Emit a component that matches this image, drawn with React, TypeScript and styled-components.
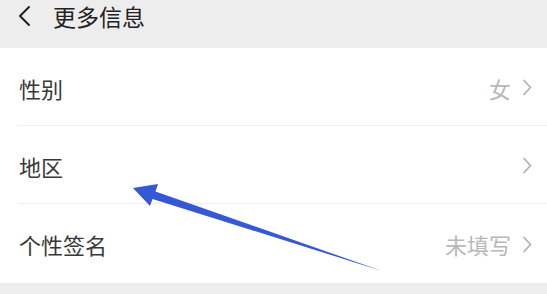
import React from "react";
import styled, { createGlobalStyle } from "styled-components";

const Global = createGlobalStyle`
  html, body { margin: 0; padding: 0; background: #ededed; }
  body { font-family: "Noto Sans CJK SC", "Noto Sans", sans-serif; }
`;

const Page = styled.div`
  position: relative;
  width: 547px;
  height: 294px;
  background: #ededed;
  overflow: hidden;
`;

const Header = styled.div`
  height: 48px;
  display: flex;
  align-items: center;
  padding-left: 16px;
  gap: 19px;
  box-sizing: border-box;
`;

const Title = styled.div`
  font-size: 23px;
  color: #222;
  line-height: 1;
  padding-bottom: 16px;
`;

const BackIcon = styled.svg`
  width: 18px;
  height: 22px;
  margin-bottom: 16px;
`;

const List = styled.div`
  background: #fff;
`;

const Row = styled.div<{ $last?: boolean }>`
  height: ${(p) => (p.$last ? 79 : 78)}px;
  display: flex;
  align-items: center;
  justify-content: space-between;
  padding: 0 15px 0 19px;
  box-sizing: border-box;
  position: relative;
  &::after {
    content: "";
    display: ${(p) => (p.$last ? "none" : "block")};
    position: absolute;
    left: 18px;
    right: 0;
    bottom: 0;
    height: 1px;
    background: #efefef;
  }
`;

const Label = styled.div`
  font-size: 22px;
  color: #383838;
  padding-top: 1px;
`;

const Right = styled.div`
  display: flex;
  align-items: center;
  gap: 11px;
  padding-top: 1px;
`;

const Value = styled.div`
  font-size: 22px;
  color: #b8b8b8;
`;

const Chevron = styled.svg`
  width: 10px;
  height: 17px;
`;

const Arrow = styled.svg`
  position: absolute;
  left: 0;
  top: 0;
  width: 547px;
  height: 294px;
  pointer-events: none;
`;

const rows = [
  { label: "性别", value: "女" },
  { label: "地区", value: "" },
  { label: "个性签名", value: "未填写" },
];

export default function App() {
  return (
    <Page>
      <Global />
      <Header>
        <BackIcon viewBox="0 0 18 22">
          <path d="M13 2 L4 11 L13 20" fill="none" stroke="#222" strokeWidth="2" strokeLinecap="round" strokeLinejoin="round" />
        </BackIcon>
        <Title>更多信息</Title>
      </Header>
      <List>
        {rows.map((r, i) => (
          <Row key={r.label} $last={i === rows.length - 1}>
            <Label>{r.label}</Label>
            <Right>
              {r.value && <Value>{r.value}</Value>}
              <Chevron viewBox="0 0 10 17">
                <path d="M2 1.5 L8.5 8.5 L2 15.5" fill="none" stroke="#b3b3b3" strokeWidth="1.8" strokeLinecap="round" strokeLinejoin="round" />
              </Chevron>
            </Right>
          </Row>
        ))}
      </List>
      <Arrow viewBox="0 0 547 294">
        <polygon
          points="133,188 158,184 155.5,191.5 382,271 152.5,199 150,206"
          fill="#3558d4"
        />
      </Arrow>
    </Page>
  );
}
